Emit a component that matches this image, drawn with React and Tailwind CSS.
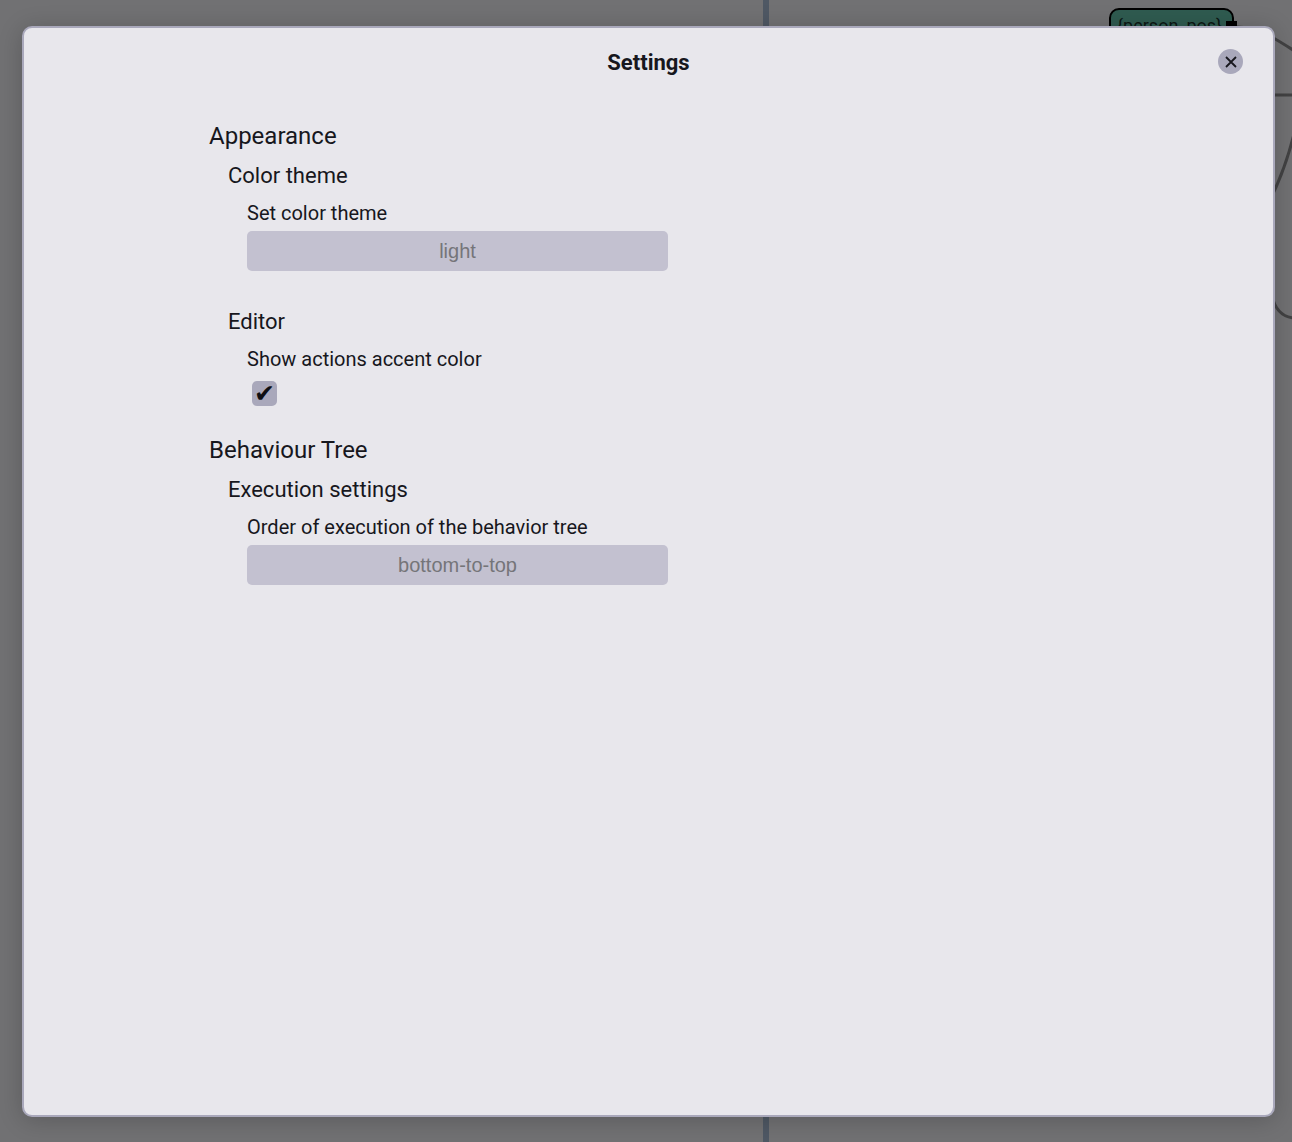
import { useState } from "react";

function Canvas() {
  return (
    <div aria-hidden="true" className="absolute inset-0 flex overflow-hidden bg-[#717173]">
      <div className="w-[763px] shrink-0" />
      <div className="w-[6px] shrink-0 bg-[#4f5864]" />
      <div className="relative flex-1">
        <div className="absolute top-2 left-[340px] h-16 w-[125px] rounded-[10px] border-2 border-black bg-[#2f5b50] pt-1 pl-[6px] text-[18px] leading-6 text-[#0c1714]">
          {"{person_pos}"}
        </div>
        <div className="absolute top-[21px] left-[457px] h-3 w-[11px] bg-black" />
        <svg
          className="absolute top-0 left-[463px]"
          width="60"
          height="340"
          viewBox="1232 0 60 340"
          fill="none"
          stroke="#424243"
          strokeWidth="3"
        >
          <path d="M1237 27C1256 27 1270 35 1293 50" />
          <path d="M1260 95H1293" />
          <path d="M1270 200C1280 180 1287 162 1294 134" />
          <path d="M1272 296C1275 309 1282 317 1294 318" />
        </svg>
      </div>
    </div>
  );
}

function Group({ title, children }) {
  return (
    <section>
      <h2 className="text-[24px] leading-10">{title}</h2>
      <div className="pl-[19px]">{children}</div>
    </section>
  );
}

function Subgroup({ title, children }) {
  return (
    <section>
      <h3 className="text-[22px] leading-10">{title}</h3>
      <div className="pl-[19px]">{children}</div>
    </section>
  );
}

function SelectField({ id, label, options }) {
  const [value, setValue] = useState(options[0]);
  return (
    <div className="flex flex-col">
      <label htmlFor={id} className="text-[20px] leading-[35px]">
        {label}
      </label>
      <select
        id={id}
        value={value}
        onChange={(e) => setValue(e.target.value)}
        className="h-10 w-[421px] max-w-full appearance-none rounded-[5px] bg-[#c3c1d0] text-center font-['Liberation_Sans',sans-serif] text-[20px] text-[#757579] [text-align-last:center]"
      >
        {options.map((o) => (
          <option key={o}>{o}</option>
        ))}
      </select>
    </div>
  );
}

function CheckField({ id, label }) {
  const [checked, setChecked] = useState(true);
  return (
    <div className="flex flex-col">
      <label htmlFor={id} className="text-[20px] leading-[35px]">
        {label}
      </label>
      <input
        id={id}
        type="checkbox"
        checked={checked}
        onChange={(e) => setChecked(e.target.checked)}
        className="m-1 ml-[5px] flex size-[25px] appearance-none items-center justify-center rounded-[5px] bg-[#a9a8bb] font-['DejaVu_Sans',sans-serif] text-[25px] leading-none text-[#0e0e12] checked:before:content-['✔']"
      />
    </div>
  );
}

export default function App() {
  return (
    <div className="relative flex min-h-screen pt-[26px] pr-[17px] pb-[25px] pl-[22px] font-[Roboto,sans-serif] text-[#17171d]">
      <Canvas />
      <div
        role="dialog"
        aria-labelledby="settings-title"
        className="relative flex-1 rounded-[10px] border-2 border-[#a9a8bb] bg-[#e8e7ec] shadow-[0_3px_24px_rgba(0,0,0,0.2)]"
      >
        <header className="grid grid-cols-[1fr_auto_1fr] items-start px-[30px] pt-[21px]">
          <h1 id="settings-title" className="col-start-2 text-[22px] leading-[27px] font-bold">
            Settings
          </h1>
          <button
            type="button"
            aria-label="Close"
            className="flex size-[25px] items-center justify-center justify-self-end rounded-full bg-[#a9a8bb]"
          >
            <svg width="12" height="12" viewBox="0 0 12 12" stroke="#17171d" strokeWidth="1.8">
              <path d="M1 1L11 11M11 1L1 11" />
            </svg>
          </button>
        </header>
        <main className="flex flex-col gap-5 px-[185px] pt-10">
          <Group title="Appearance">
            <div className="flex flex-col gap-[31px]">
              <Subgroup title="Color theme">
                <SelectField id="theme" label="Set color theme" options={["light", "dark"]} />
              </Subgroup>
              <Subgroup title="Editor">
                <CheckField id="accent" label="Show actions accent color" />
              </Subgroup>
            </div>
          </Group>
          <Group title="Behaviour Tree">
            <Subgroup title="Execution settings">
              <SelectField
                id="order"
                label="Order of execution of the behavior tree"
                options={["bottom-to-top", "top-to-bottom"]}
              />
            </Subgroup>
          </Group>
        </main>
      </div>
    </div>
  );
}
